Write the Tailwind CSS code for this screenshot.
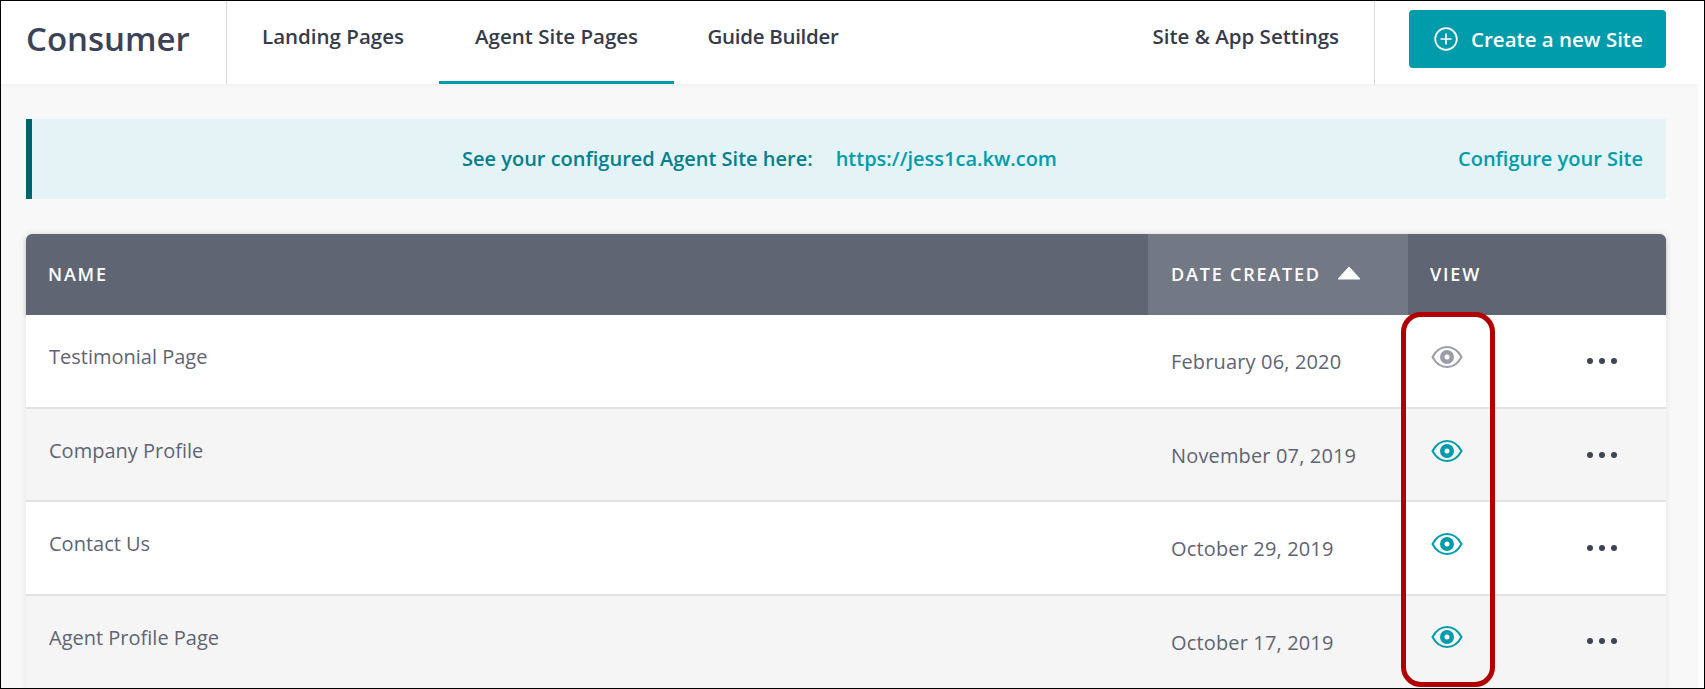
<!DOCTYPE html>
<html lang="en">
<head>
  <meta charset="UTF-8" />
  <title>Consumer</title>
  <script src="https://cdn.jsdelivr.net/npm/@tailwindcss/browser@4"></script>
</head>
<body class="bg-white font-['Open_Sans','Lato',sans-serif]">
  <div class="relative w-[1705px] h-[689px] overflow-hidden border border-black bg-white">

    <!-- top bar -->
    <header class="flex h-[83px] items-stretch bg-white text-[#363b4a]">
      <div class="flex w-[226px] items-start border-r border-[#d5d8dc] pl-[25px] pt-[14px]">
        <h1 class="text-[33px] font-semibold leading-[48px] text-[#3d4356]">Consumer</h1>
      </div>
      <nav class="flex flex-1 text-[20.500px] font-semibold leading-[28px]">
        <a class="flex w-[212px] justify-center pt-[21px]">Landing Pages</a>
        <a class="flex w-[235px] justify-center border-b-[3px] border-[#019cab] pt-[21px]">Agent Site Pages</a>
        <a class="flex w-[198px] justify-center pt-[21px] tracking-[-0.300px]">Guide Builder</a>
        <a class="ml-auto pr-[35px] pt-[21px]">Site &amp; App Settings</a>
      </nav>
      <div class="flex w-[330px] items-start border-l border-[#d5d8dc] pl-[34px] pt-[9px]">
        <button class="flex h-[58px] w-[257px] items-center gap-[13px] rounded-[4px] bg-[#019cab] pl-[25px] text-[20.500px] font-semibold text-white">
          <svg class="h-[24px] w-[24px]" viewBox="0 0 24 24" fill="none" stroke="white" stroke-width="1.7">
            <circle cx="12" cy="12" r="10.8" />
            <path d="M12 6.5v11M6.5 12h11" />
          </svg>
          Create a new Site
        </button>
      </div>
    </header>

    <main class="mr-[6px] h-[604px] bg-[#f8f8f8] pl-[25px] pr-[32px] pt-[35px] shadow-[inset_0_5px_5px_-4px_rgba(0,0,0,0.04)]">
      <!-- banner -->
      <div class="flex h-[80px] items-center border-l-[6px] border-[#00636e] bg-[#e3f3f6] pr-[23px] text-[20px] font-semibold">
        <span class="ml-[430px] text-[#03808c]">See your configured Agent Site here:</span>
        <a class="ml-[23px] text-[#019cab]">https://jess1ca.kw.com</a>
        <a class="ml-auto text-[#019cab]">Configure your Site</a>
      </div>

      <!-- table -->
      <div class="mt-[35px] shadow-[0_0_8px_rgba(0,0,0,0.08)]">
        <div class="grid h-[81px] grid-cols-[1122px_260px_1fr] overflow-hidden rounded-t-[6px] bg-[#606574] text-[18px] font-semibold tracking-[1.800px] text-white shadow-[0_2px_4px_rgba(0,0,0,0.2)]">
          <div class="flex items-center pl-[22px]">NAME</div>
          <div class="flex items-center bg-[#737885] pl-[23px]">
            DATE CREATED
            <svg class="ml-[16px] mb-[4px] h-[14px] w-[24px]" viewBox="0 0 24 14" fill="white"><path d="M12 1 L23 13 H1 Z" stroke="white" stroke-linejoin="round" /></svg>
          </div>
          <div class="flex items-center pl-[22px]">VIEW</div>
        </div>

        <div class="grid h-[94px] grid-cols-[1122px_260px_1fr] border-b-2 border-[#e2e2e2] bg-white text-[20px] leading-[27px] text-[#5f6473]">
          <div class="pl-[23px] pt-[28px]">Testimonial Page</div>
          <div class="pl-[23px] pt-[33px] tracking-[0.150px]">February 06, 2020</div>
          <div class="relative">
            <svg class="absolute left-[23px] top-[30px] h-[24px] w-[32px]" viewBox="0 0 32 24" fill="none" stroke="#9a9da8" stroke-width="2"><path d="M1.5 12C5 5.500 10 2 16 2s11 3.500 14.500 10C27 18.500 22 22 16 22S5 18.500 1.500 12Z" /><circle cx="16" cy="12" r="4.750" stroke-width="4.500" /></svg>
            <div class="absolute left-[179px] top-[43px] flex gap-[6px]"><i class="h-[6px] w-[6px] rounded-full bg-[#3d4356]"></i><i class="h-[6px] w-[6px] rounded-full bg-[#3d4356]"></i><i class="h-[6px] w-[6px] rounded-full bg-[#3d4356]"></i></div>
          </div>
        </div>

        <div class="grid h-[93px] grid-cols-[1122px_260px_1fr] border-b-2 border-[#e2e2e2] bg-[#f5f5f5] text-[20px] leading-[27px] text-[#5f6473]">
          <div class="pl-[23px] pt-[28px]">Company Profile</div>
          <div class="pl-[23px] pt-[33px] tracking-[0.150px]">November 07, 2019</div>
          <div class="relative">
            <svg class="absolute left-[23px] top-[30px] h-[24px] w-[32px]" viewBox="0 0 32 24" fill="none" stroke="#019cab" stroke-width="2"><path d="M1.5 12C5 5.500 10 2 16 2s11 3.500 14.500 10C27 18.500 22 22 16 22S5 18.500 1.500 12Z" /><circle cx="16" cy="12" r="4.750" stroke-width="4.500" /></svg>
            <div class="absolute left-[179px] top-[43px] flex gap-[6px]"><i class="h-[6px] w-[6px] rounded-full bg-[#3d4356]"></i><i class="h-[6px] w-[6px] rounded-full bg-[#3d4356]"></i><i class="h-[6px] w-[6px] rounded-full bg-[#3d4356]"></i></div>
          </div>
        </div>

        <div class="grid h-[94px] grid-cols-[1122px_260px_1fr] border-b-2 border-[#e2e2e2] bg-white text-[20px] leading-[27px] text-[#5f6473]">
          <div class="pl-[23px] pt-[28px]">Contact Us</div>
          <div class="pl-[23px] pt-[33px] tracking-[0.150px]">October 29, 2019</div>
          <div class="relative">
            <svg class="absolute left-[23px] top-[30px] h-[24px] w-[32px]" viewBox="0 0 32 24" fill="none" stroke="#019cab" stroke-width="2"><path d="M1.5 12C5 5.500 10 2 16 2s11 3.500 14.500 10C27 18.500 22 22 16 22S5 18.500 1.500 12Z" /><circle cx="16" cy="12" r="4.750" stroke-width="4.500" /></svg>
            <div class="absolute left-[179px] top-[43px] flex gap-[6px]"><i class="h-[6px] w-[6px] rounded-full bg-[#3d4356]"></i><i class="h-[6px] w-[6px] rounded-full bg-[#3d4356]"></i><i class="h-[6px] w-[6px] rounded-full bg-[#3d4356]"></i></div>
          </div>
        </div>

        <div class="grid h-[94px] grid-cols-[1122px_260px_1fr] bg-[#f5f5f5] text-[20px] leading-[27px] text-[#5f6473]">
          <div class="pl-[23px] pt-[28px]">Agent Profile Page</div>
          <div class="pl-[23px] pt-[33px] tracking-[0.150px]">October 17, 2019</div>
          <div class="relative">
            <svg class="absolute left-[23px] top-[29px] h-[24px] w-[32px]" viewBox="0 0 32 24" fill="none" stroke="#019cab" stroke-width="2"><path d="M1.5 12C5 5.500 10 2 16 2s11 3.500 14.500 10C27 18.500 22 22 16 22S5 18.500 1.500 12Z" /><circle cx="16" cy="12" r="4.750" stroke-width="4.500" /></svg>
            <div class="absolute left-[179px] top-[42px] flex gap-[6px]"><i class="h-[6px] w-[6px] rounded-full bg-[#3d4356]"></i><i class="h-[6px] w-[6px] rounded-full bg-[#3d4356]"></i><i class="h-[6px] w-[6px] rounded-full bg-[#3d4356]"></i></div>
          </div>
        </div>
      </div>
    </main>

    <!-- red callout drawn over the view column -->
    <div class="absolute left-[1400px] top-[311px] h-[375px] w-[94px] rounded-[20px] border-[5px] border-[#b00000]"></div>
  </div>
</body>
</html>
